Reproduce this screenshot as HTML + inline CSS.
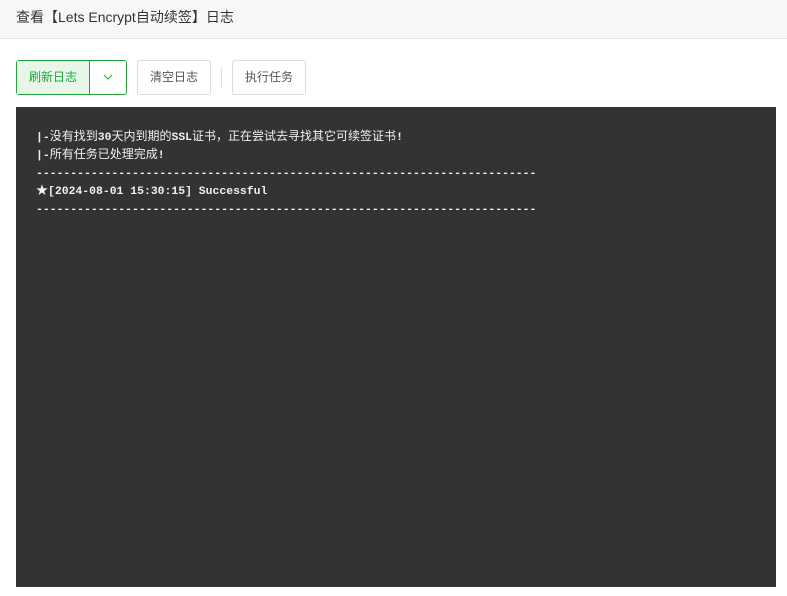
<!DOCTYPE html>
<html><head><meta charset="utf-8"><style>
*{margin:0;padding:0;box-sizing:border-box}
body{width:787px;height:596px;background:#fff;font-family:"Liberation Sans","Noto Sans CJK SC",sans-serif;position:relative;overflow:hidden}
.hd{position:absolute;left:0;top:0;width:787px;height:39px;background:#f7f7f7;border-bottom:1px solid #e6e6e6;font-size:14px;color:#333;line-height:34px;padding-left:16px}
.b{position:absolute;top:60px;height:35px;border:1px solid #dcdcdc;border-radius:3px;font-size:12px;color:#555;line-height:33px;text-align:center}
.g{left:16px;width:111px;border-color:#20a53a;color:#20a53a;background:#fff}
.g .l{position:absolute;left:0;top:0;width:73px;height:33px;background:#e8f6ea;border-right:1px solid #20a53a}
.g svg{position:absolute;left:86px;top:12px}
.dv{position:absolute;left:221px;top:67px;width:1px;height:20px;background:#e0e0e0}
.log{position:absolute;left:16px;top:107px;width:760px;height:480px;background:#333;color:#f0f0f0;font-family:"Liberation Mono",monospace;font-size:11.43px;font-weight:bold;padding:22px 0 0 20px}
.ln{height:18px;line-height:18px;white-space:pre;overflow:visible}
.c{font-family:"Noto Sans CJK SC",sans-serif;font-weight:normal;font-size:12px;line-height:0}
</style></head><body>
<div class="hd">查看【Lets Encrypt自动续签】日志</div>
<div class="b g"><div class="l">刷新日志</div><svg width="10" height="8" viewBox="0 0 10 8"><path d="M1 2l4 4 4-4" fill="none" stroke="#20a53a" stroke-width="1"/></svg></div>
<div class="b" style="left:137px;width:74px">清空日志</div>
<div class="dv"></div>
<div class="b" style="left:232px;width:74px">执行任务</div>
<div class="log"><div class="ln">|-<span class="c">没有找到</span>30<span class="c">天内到期的</span>SSL<span class="c">证书，正在尝试去寻找其它可续签证书</span>!</div><div class="ln">|-<span class="c">所有任务已处理完成</span>!</div><div class="ln">-------------------------------------------------------------------------</div><div class="ln"><span class="c">★</span>[2024-08-01 15:30:15] Successful</div><div class="ln">-------------------------------------------------------------------------</div></div>
</body></html>
